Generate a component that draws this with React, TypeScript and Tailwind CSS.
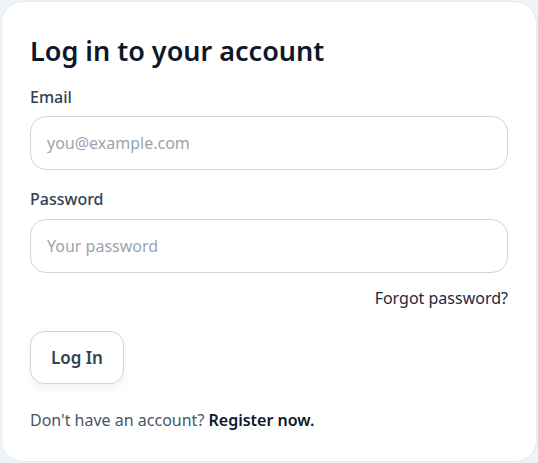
export default function App() {
  return (
    <div
      className="min-h-[463px] bg-[#eef3f8] p-px"
      style={{ fontFamily: '"Noto Sans", Inter, sans-serif' }}
    >
      <div className="flex h-[461px] flex-col rounded-[22px] border border-[#e3e9f1] bg-white px-[28px] pt-[30px]">
        <h1 className="text-[27px] font-semibold leading-[38px] text-[#0f172a]">Log in to your account</h1>

        <label className="mt-[15px] text-[16px] font-medium leading-[24px] text-[#334155]">Email</label>
        <input
          className="mt-[7px] h-[54px] w-full rounded-[16px] border border-[#cbd5e1] px-[16px] text-[16px] text-[#0f172a] placeholder:text-[#9ca3af] outline-none"
          placeholder="you@example.com"
        />

        <label className="mt-[17px] text-[16px] font-medium leading-[24px] text-[#334155]">Password</label>
        <input
          type="password"
          className="mt-[8px] h-[54px] w-full rounded-[16px] border border-[#cbd5e1] px-[16px] text-[16px] text-[#0f172a] placeholder:text-[#9ca3af] outline-none"
          placeholder="Your password"
        />

        <div className="mt-[13px] flex justify-end">
          <a className="text-[16px] leading-[24px] text-[#1e293b]">Forgot password?</a>
        </div>

        <div className="mt-[21px]">
          <button className="h-[53px] rounded-[14px] border border-[#cbd5e1] bg-white px-[20px] text-[17px] font-semibold text-[#334155] shadow-[0_4px_10px_rgba(15,23,42,0.06)]">
            Log In
          </button>
        </div>

        <p className="mt-[24px] text-[16px] leading-[24px] text-[#475569]">
          Don't have an account? <a className="font-semibold text-[#0f172a]">Register now.</a>
        </p>
      </div>
    </div>
  );
}
